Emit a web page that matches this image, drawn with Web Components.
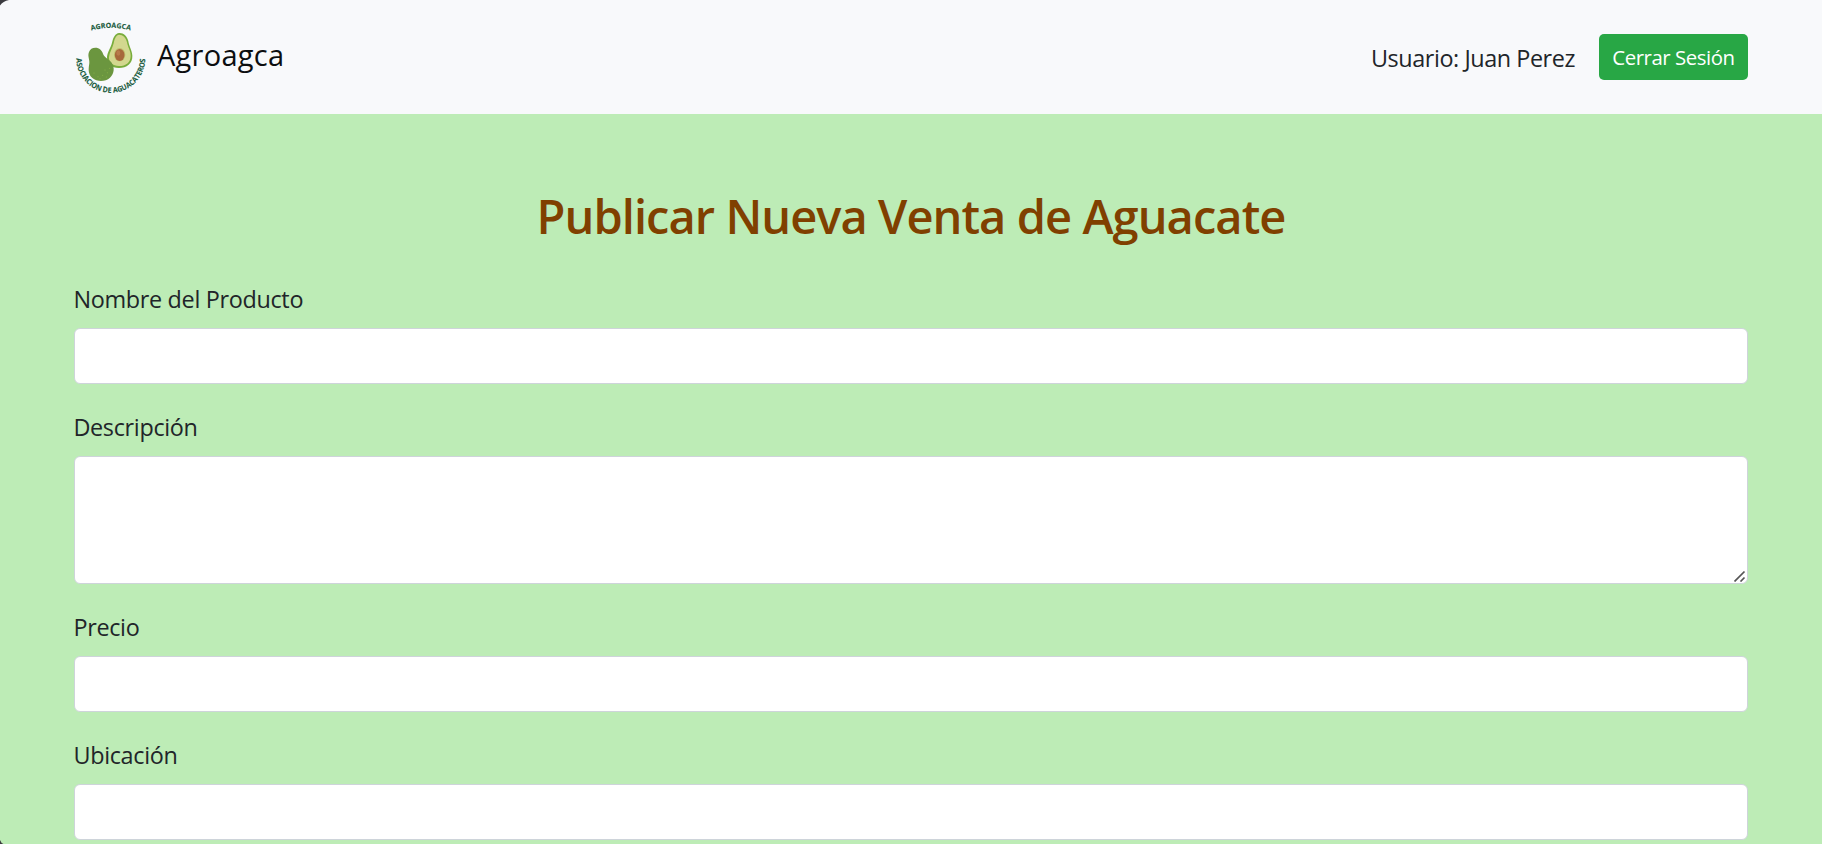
<!DOCTYPE html>
<html lang="es">
<head>
<meta charset="utf-8">
<title>Agroagca</title>
<style>
html, body { margin: 0; height: 100%; overflow: hidden; background: #bdecb6; }
body { font-family: "Open Sans", "Noto Sans", sans-serif; color: #212529; }
</style>
</head>
<body>
<agro-page>
  <agro-navbar slot="header">
    <agro-brand slot="brand">Agroagca</agro-brand>
    <agro-user slot="actions">Usuario: Juan Perez</agro-user>
    <agro-button slot="actions">Cerrar Sesión</agro-button>
  </agro-navbar>
  <agro-title>Publicar Nueva Venta de Aguacate</agro-title>
  <agro-field>Nombre del Producto</agro-field>
  <agro-field multiline>Descripción</agro-field>
  <agro-field>Precio</agro-field>
  <agro-field>Ubicación</agro-field>
</agro-page>
<script>
function define(name, html, setup) {
  const template = document.createElement('template');
  template.innerHTML = html;
  customElements.define(name, class extends HTMLElement {
    constructor() {
      super();
      this.attachShadow({ mode: 'open' }).append(template.content.cloneNode(true));
      if (setup) setup(this, this.shadowRoot);
    }
  });
}

define('agro-page', `
<style>
:host { display: block; position: relative; height: 844px; overflow: hidden; background: #bdecb6; }
main { padding: 73px 74px 0; }
.corner { position: absolute; left: 0; display: block; }
.top { top: 0; } .bottom { bottom: 0; }
</style>
<slot name="header"></slot>
<main><slot></slot></main>
<svg class="corner top" width="9" height="6"><path d="M0 0H9Q3 1 0 5.5Z" fill="#3b3b3f"/></svg>
<svg class="corner bottom" width="4" height="4"><path d="M0 0Q1 3 3.5 4H0Z" fill="#3b3b3f"/></svg>`);

define('agro-navbar', `
<style>
:host { display: flex; justify-content: space-between; align-items: center; height: 114px; padding: 0 74px; box-sizing: border-box; background: #f8f9fb; }
div { display: flex; align-items: center; gap: 24px; }
</style>
<slot name="brand"></slot><div><slot name="actions"></slot></div>`);

define('agro-brand', `
<style>
:host { display: flex; align-items: center; gap: 8px; font-size: 29px; line-height: 45px; color: #0c0e10; letter-spacing: .25px; }
svg { display: block; width: 75px; height: 84px; }
span { margin-top: -6px; }
text { font-family: "Open Sans", sans-serif; font-weight: 700; fill: #17593b; letter-spacing: 0; stroke: #17593b; stroke-width: .3px; }
</style>
<svg viewBox="12 0 225 252">
  <defs>
    <path id="t" d="M64 47Q122 30 184 47"/>
    <path id="b" d="M19 130A103.500 103.500 0 0 0 226 130"/>
  </defs>
  <text font-size="21"><textPath href="#t" textLength="119" lengthAdjust="spacingAndGlyphs">AGROAGCA</textPath></text>
  <path d="M147 54C160 53 172 63 175 79C177 94 186 105 187 122C188 145 170 159 147 159C124 159 110 146 111 126C112 111 122 99 126 83C130 66 136 56 147 54Z" fill="#79ad3c"/>
  <path d="M147 59C159 59 168 68 171 82C173 96 182 107 182 122C182 142 168 153 147 153C128 153 116 142 117 127C118 113 127 101 131 85C134 69 139 60 147 59Z" fill="#d3d88f"/>
  <ellipse cx="149" cy="119" rx="17" ry="20" fill="#c0bc6d"/>
  <ellipse cx="149" cy="120" rx="14.5" ry="18" fill="#a7683b"/>
  <ellipse cx="145" cy="114" rx="6" ry="8" fill="#b87a4b"/>
  <path d="M76 98C88 98 96 106 99 116C102 127 115 130 124 142C135 157 133 176 120 188C106 201 81 201 67 189C51 175 57 155 58 144C59 133 52 123 57 111C60 102 67 98 76 98Z" fill="#6b963f"/>
  <g fill="#8eb647"><circle cx="72" cy="174" r="1.5"/><circle cx="84" cy="185" r="1.5"/><circle cx="98" cy="181" r="1.5"/><circle cx="112" cy="173" r="1.5"/><circle cx="119" cy="160" r="1.5"/><circle cx="105" cy="165" r="1.5"/><circle cx="90" cy="191" r="1.5"/><circle cx="109" cy="186" r="1.5"/></g>
  <text font-size="22.5"><textPath href="#b" textLength="323" lengthAdjust="spacingAndGlyphs">ASOCIACION DE AGUACATEROS</textPath></text>
</svg>
<span><slot></slot></span>`);

define('agro-user', `
<style>:host { display: block; font-size: 23.4px; line-height: 36px; letter-spacing: -.43px; padding-top: 2px; white-space: nowrap; }</style>
<slot></slot>`);

define('agro-button', `
<style>
:host { display: block; }
button { display: flex; align-items: center; justify-content: center; width: 149px; height: 46px; padding: 0; border: 0; border-radius: 5px; background: #28a745; color: #fff; font: 20.4px/32px "Open Sans", sans-serif; letter-spacing: -.45px; white-space: nowrap; }
</style>
<button type="button"><span><slot></slot></span></button>`);

define('agro-title', `
<style>
:host { display: block; }
h2 { margin: 0 0 36px; font-size: 47px; line-height: 58px; font-weight: 600; letter-spacing: -.94px; color: #804000; text-align: center; white-space: nowrap; }
</style>
<h2><slot></slot></h2>`);

define('agro-field', `
<style>
:host { display: block; margin-bottom: 24px; }
label { display: block; margin: 0 0 11px -.6px; font-size: 23.4px; line-height: 36px; letter-spacing: -.32px; }
input, textarea { display: block; box-sizing: border-box; width: 100%; height: 56px; margin: 0; padding: 8px 18px; border: 1px solid #ced4da; border-radius: 6px; background: #fff; font: inherit; outline: 0; }
:host(:not(:first-of-type)) label { padding-top: 1px; }
.area { position: relative; }
textarea { height: 128px; resize: none; overflow: hidden; }
svg { position: absolute; right: 2px; bottom: 2px; display: block; }
</style>
<label><slot></slot></label>
<div class="area"></div>`, (host, root) => {
  const area = root.querySelector('.area');
  area.innerHTML = host.hasAttribute('multiline')
    ? '<textarea></textarea><svg width="12" height="12" fill="none" stroke="#555" stroke-width="1.7"><path d="M.5 11.5L10.5 1.5M6.5 11.5L10.5 7.5"/></svg>'
    : '<input type="text">';
});
</script>
</body>
</html>
